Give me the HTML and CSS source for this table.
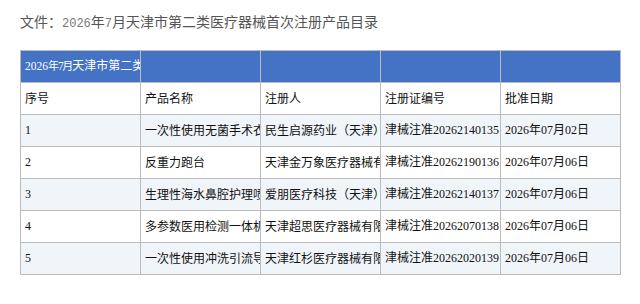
FILE: index.html
```html
<!DOCTYPE html>
<html lang="zh">
<head>
<meta charset="utf-8">
<link rel="stylesheet" href="styles.css">
</head>
<body>
<div class="page">
  <div class="title">文件：<span class="tnum">2026</span>年<span class="tnum">7</span>月天津市第二类医疗器械首次注册产品目录</div>
  <table class="grid">
    <colgroup><col><col><col><col><col></colgroup>
    <tr class="head">
      <td><div class="cell"><span class="hnum">2026</span><span class="hcjk">年</span><span class="hnum seven">7</span><span class="hcjk">月</span>天津市第二类医疗器械首次注册产品目录</div></td>
      <td><div class="cell"></div></td>
      <td><div class="cell"></div></td>
      <td><div class="cell"></div></td>
      <td><div class="cell"></div></td>
    </tr>
    <tr class="labels">
      <td><div class="cell">序号</div></td>
      <td><div class="cell">产品名称</div></td>
      <td><div class="cell">注册人</div></td>
      <td><div class="cell">注册证编号</div></td>
      <td><div class="cell">批准日期</div></td>
    </tr>
    <tr class="alt">
      <td><div class="cell num">1</div></td>
      <td><div class="cell">一次性使用无菌手术衣</div></td>
      <td><div class="cell">民生启源药业（天津）有限公司</div></td>
      <td><div class="cell">津械注准<span class="num">20262140135</span></div></td>
      <td><div class="cell"><span class="num">2026</span>年<span class="num">07</span>月<span class="num">02</span>日</div></td>
    </tr>
    <tr>
      <td><div class="cell num">2</div></td>
      <td><div class="cell">反重力跑台</div></td>
      <td><div class="cell">天津金万象医疗器械有限公司</div></td>
      <td><div class="cell">津械注准<span class="num">20262190136</span></div></td>
      <td><div class="cell"><span class="num">2026</span>年<span class="num">07</span>月<span class="num">06</span>日</div></td>
    </tr>
    <tr class="alt">
      <td><div class="cell num">3</div></td>
      <td><div class="cell">生理性海水鼻腔护理喷雾器</div></td>
      <td><div class="cell">爱朋医疗科技（天津）有限公司</div></td>
      <td><div class="cell">津械注准<span class="num">20262140137</span></div></td>
      <td><div class="cell"><span class="num">2026</span>年<span class="num">07</span>月<span class="num">06</span>日</div></td>
    </tr>
    <tr>
      <td><div class="cell num">4</div></td>
      <td><div class="cell">多参数医用检测一体机</div></td>
      <td><div class="cell">天津超思医疗器械有限公司</div></td>
      <td><div class="cell">津械注准<span class="num">20262070138</span></div></td>
      <td><div class="cell"><span class="num">2026</span>年<span class="num">07</span>月<span class="num">06</span>日</div></td>
    </tr>
    <tr class="alt">
      <td><div class="cell num">5</div></td>
      <td><div class="cell">一次性使用冲洗引流导管</div></td>
      <td><div class="cell">天津红杉医疗器械有限公司</div></td>
      <td><div class="cell">津械注准<span class="num">20262020139</span></div></td>
      <td><div class="cell"><span class="num">2026</span>年<span class="num">07</span>月<span class="num">06</span>日</div></td>
    </tr>
  </table>
</div>
</body>
</html>
```

FILE: styles.css
```css
html, body {
  margin: 0;
  padding: 0;
  background: #ffffff;
}
.page {
  padding: 11px 20px 0 20px;
  font-family: "Noto Sans CJK SC", "Noto Sans", sans-serif;
}
.title {
  font-size: 14px;
  line-height: 20px;
  color: #555555;
  height: 20px;
  margin-bottom: 19px;
}
.tnum {
  font-family: "Liberation Mono", monospace;
  font-size: 12px;
  color: #777777;
}
.grid {
  border-collapse: collapse;
  table-layout: fixed;
  width: 601px;
}
.grid col {
  width: 120px;
}
.grid td {
  border: 1px solid #bbbbbb;
  padding: 0;
  height: 31px;
  vertical-align: middle;
  font-size: 12px;
  color: #111111;
}
.cell {
  white-space: nowrap;
  overflow: hidden;
  padding: 0 0 2px 4px;
  line-height: 16px;
}
.head td {
  background: #4472c4;
  color: #ffffff;
}
.hnum {
  font-family: "Liberation Serif", serif;
  font-size: 11.5px;
}
.hnum.seven {
  letter-spacing: -1.5px;
}
.hcjk {
  font-size: 11px;
  letter-spacing: -1px;
}
.alt td {
  background: #f0f5fa;
}
.num {
  font-family: "Liberation Serif", serif;
  font-size: 12px;
}
```
